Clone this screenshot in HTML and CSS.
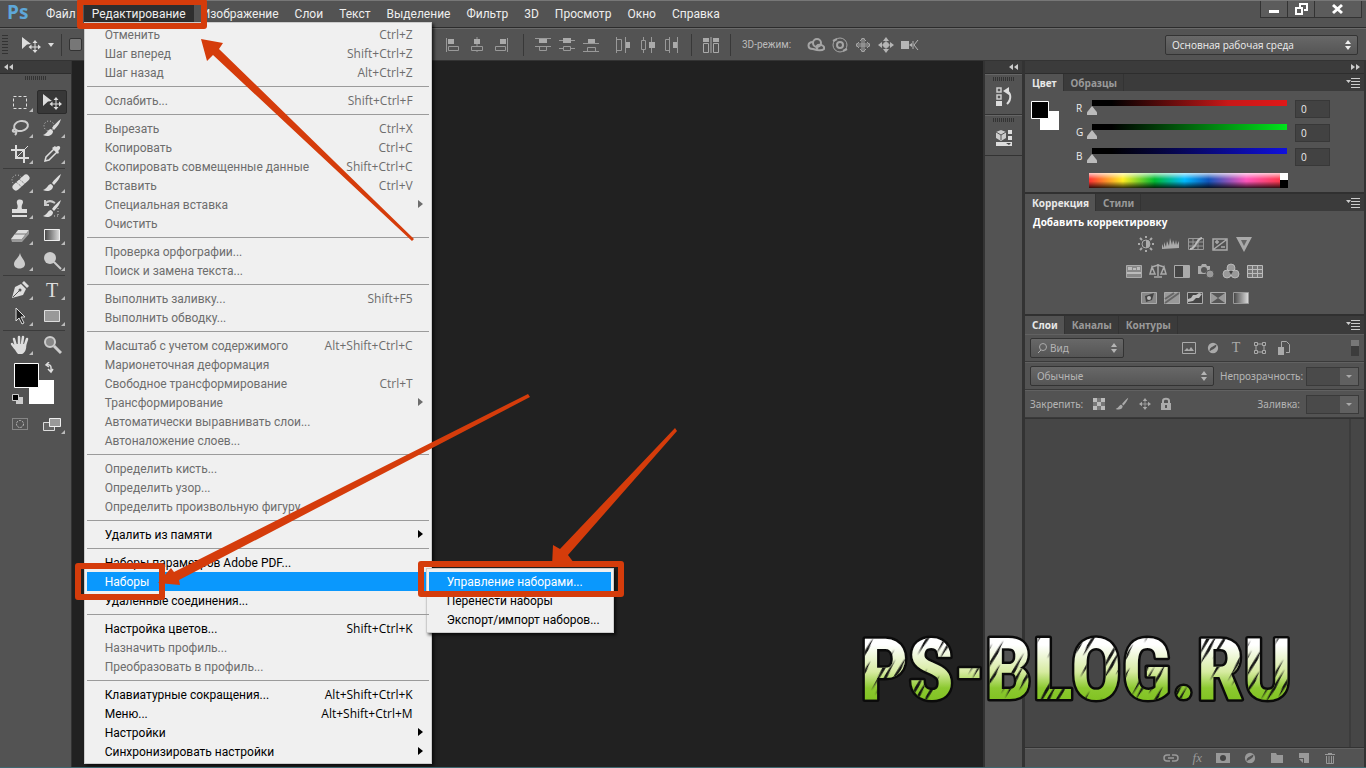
FILE: index.html
```html
<!DOCTYPE html>
<html lang="ru">
<head>
<meta charset="utf-8">
<title>Редактирование – Наборы</title>
<link rel="stylesheet" href="styles.css">
</head>
<body>
<svg class="sprite" aria-hidden="true">
  <symbol id="updown" viewBox="0 0 8 10"><path fill="currentColor" d="M4 0l3 4H1zM4 10l3-4H1z"/></symbol>
  <symbol id="panelmenu" viewBox="0 0 14 10"><path fill="currentColor" d="M0 2h5L2.500 5zM5 0h9v1H5zM5 3h9v1H5zM5 6h9v1H5zM5 9h9v1H5z"/></symbol>
  <symbol id="move" viewBox="0 0 20 16"><path fill="currentColor" d="M1 0l9 7-4 .5L1 12z"/><path d="M14 5v10M9 10h10" stroke="currentColor"/><path fill="currentColor" d="M14 3l2.500 3h-5zM14 16l2.500-3h-5zM7.500 10l3-2.500v5zM20 10l-3-2.500v5z"/></symbol>
  <symbol id="brush" viewBox="0 0 20 20"><path fill="currentColor" d="M19 1c-3 2-7 6-9 9l2 2c3-3 6-7 7-11zM9 11c-3 0-3 4-8 6 4 2 10 1 10-4z"/></symbol>
  <symbol id="cross" viewBox="0 0 16 16"><path d="M8 2v12M2 8h12" stroke="currentColor"/><path fill="currentColor" d="M8 0l3 4H5zM8 16l3-4H5zM0 8l4-3v6zM16 8l-4-3v6z"/></symbol>
  <symbol id="halfdisc" viewBox="0 0 14 14"><circle cx="7" cy="7" r="6" fill="currentColor"/><path d="M3 11c0-5 3-5 8-8 0 5-4 5-8 8z" fill="#535353"/></symbol>
</svg>

<header class="menubar">
  <div class="brand">Ps</div>
  <nav class="menus">
    <button class="menu">Файл</button>
    <div class="menu-holder">
      <button class="menu open">Редактирование</button>
      <ul class="dropdown">
        <li class="off"><span>Отменить</span><kbd>Ctrl+Z</kbd></li>
        <li class="off"><span>Шаг вперед</span><kbd>Shift+Ctrl+Z</kbd></li>
        <li class="off"><span>Шаг назад</span><kbd>Alt+Ctrl+Z</kbd></li>
        <li class="rule"></li>
        <li class="off"><span>Ослабить...</span><kbd>Shift+Ctrl+F</kbd></li>
        <li class="rule"></li>
        <li class="off"><span>Вырезать</span><kbd>Ctrl+X</kbd></li>
        <li class="off"><span>Копировать</span><kbd>Ctrl+C</kbd></li>
        <li class="off"><span>Скопировать совмещенные данные</span><kbd>Shift+Ctrl+C</kbd></li>
        <li class="off"><span>Вставить</span><kbd>Ctrl+V</kbd></li>
        <li class="off more"><span>Специальная вставка</span></li>
        <li class="off"><span>Очистить</span></li>
        <li class="rule"></li>
        <li class="off"><span>Проверка орфографии...</span></li>
        <li class="off"><span>Поиск и замена текста...</span></li>
        <li class="rule"></li>
        <li class="off"><span>Выполнить заливку...</span><kbd>Shift+F5</kbd></li>
        <li class="off"><span>Выполнить обводку...</span></li>
        <li class="rule"></li>
        <li class="off"><span>Масштаб с учетом содержимого</span><kbd>Alt+Shift+Ctrl+C</kbd></li>
        <li class="off"><span>Марионеточная деформация</span></li>
        <li class="off"><span>Свободное трансформирование</span><kbd>Ctrl+T</kbd></li>
        <li class="off more"><span>Трансформирование</span></li>
        <li class="off"><span>Автоматически выравнивать слои...</span></li>
        <li class="off"><span>Автоналожение слоев...</span></li>
        <li class="rule"></li>
        <li class="off"><span>Определить кисть...</span></li>
        <li class="off"><span>Определить узор...</span></li>
        <li class="off"><span>Определить произвольную фигуру</span></li>
        <li class="rule"></li>
        <li class="more"><span>Удалить из памяти</span></li>
        <li class="rule"></li>
        <li><span>Наборы параметров Adobe PDF...</span></li>
        <li class="active"><span>Наборы</span>
          <ul class="submenu">
            <li class="active"><span>Управление наборами...</span></li>
            <li><span>Перенести наборы</span></li>
            <li><span>Экспорт/импорт наборов...</span></li>
          </ul>
        </li>
        <li><span>Удаленные соединения...</span></li>
        <li class="rule"></li>
        <li><span>Настройка цветов...</span><kbd>Shift+Ctrl+K</kbd></li>
        <li class="off"><span>Назначить профиль...</span></li>
        <li class="off"><span>Преобразовать в профиль...</span></li>
        <li class="rule"></li>
        <li><span>Клавиатурные сокращения...</span><kbd>Alt+Shift+Ctrl+K</kbd></li>
        <li><span>Меню...</span><kbd>Alt+Shift+Ctrl+M</kbd></li>
        <li class="more"><span>Настройки</span></li>
        <li class="more"><span>Синхронизировать настройки</span></li>
      </ul>
    </div>
    <button class="menu">Изображение</button>
    <button class="menu">Слои</button>
    <button class="menu">Текст</button>
    <button class="menu">Выделение</button>
    <button class="menu">Фильтр</button>
    <button class="menu">3D</button>
    <button class="menu">Просмотр</button>
    <button class="menu">Окно</button>
    <button class="menu">Справка</button>
  </nav>
  <div class="window-buttons">
    <button aria-label="Свернуть"><svg width="12" height="12"><path fill="#fff" d="M1 7h10v3H1z"/></svg></button>
    <button aria-label="Восстановить"><svg width="13" height="12" fill="none" stroke="#fff" stroke-width="2"><path d="M5 4V1h7v6H9M1 5h6v6H1z"/></svg></button>
    <button class="wide" aria-label="Закрыть"><svg width="12" height="12" stroke="#fff" stroke-width="3"><path d="M1 2l9 8M10 2L1 10"/></svg></button>
  </div>
</header>

<section class="options">
  <div class="options-left">
    <i class="vgrip"></i>
    <svg width="20" height="16"><use href="#move"/></svg>
    <svg width="6" height="4"><path fill="#ddd" d="M0 0h6L3 4z"/></svg>
    <i class="bar"></i>
    <input type="checkbox" class="tick" aria-label="Автовыбор">
  </div>
  <div class="icon-set">
    <svg width="16" height="16"><path stroke="#999" d="M1.500 1v14"/><path fill="#aaa" d="M3 2h6v5H3z"/><path fill="none" stroke="#999" d="M3.500 9.500h10v4h-10z"/></svg>
    <svg width="16" height="16"><path stroke="#999" d="M8 0v15"/><path fill="#aaa" d="M5 2h6v5H5z"/><path fill="#535353" stroke="#999" d="M2.500 9.500h11v4h-11z"/></svg>
    <svg width="16" height="16"><path stroke="#999" d="M14.500 1v14"/><path fill="#aaa" d="M7 2h6v5H7z"/><path fill="none" stroke="#999" d="M2.500 9.500h10v4h-10z"/></svg>
  </div>
  <i class="bar"></i>
  <div class="icon-set">
    <svg width="16" height="16"><path stroke="#999" d="M0 1.500h16M0 9.500h16"/><path fill="#aaa" d="M4 2h8v4H4z"/><path fill="none" stroke="#999" d="M4.500 9.500h7v4h-7z"/></svg>
    <svg width="16" height="16"><path stroke="#999" d="M0 3.500h16M0 11.500h16"/><path fill="#aaa" d="M4 1h8v5H4z"/><path fill="#535353" stroke="#999" d="M4.500 9.500h7v4h-7z"/></svg>
    <svg width="16" height="16"><path stroke="#999" d="M0 6.500h16M0 14.500h16"/><path fill="#aaa" d="M5 2h7v4H5z"/><path fill="none" stroke="#999" d="M4.500 10.500h8v4h-8z"/></svg>
  </div>
  <div class="icon-set spread">
    <svg width="16" height="16"><path stroke="#999" d="M1.500 0v16M10.500 0v16"/><path fill="#aaa" d="M11 5h4v6h-4z"/><path fill="none" stroke="#999" d="M1.500 2.500h5v11h-5z"/></svg>
    <svg width="16" height="16"><path stroke="#999" d="M4.500 0v16M12.500 0v16"/><path fill="#aaa" d="M10 5h6v6h-6z"/><path fill="#535353" stroke="#999" d="M2.500 3.500h4v9h-4z"/></svg>
    <svg width="16" height="16"><path stroke="#999" d="M6.500 0v16M14.500 0v16"/><path fill="#aaa" d="M10 5h4v6h-4z"/><path fill="none" stroke="#999" d="M2.500 2.500h4v11h-4z"/></svg>
  </div>
  <i class="bar"></i>
  <svg class="single" width="16" height="16"><path fill="#aaa" d="M0 1h6v4H0zM10 1h6v4h-6z"/><path fill="none" stroke="#aaa" d="M.5 6.500h5v9h-5zM10.500 6.500h5v9h-5zM8 0v16"/></svg>
  <i class="bar"></i>
  <span class="mode-label">3D-режим:</span>
  <div class="icon-set modes">
    <svg width="18" height="16" fill="none" stroke="#a5a5a5" stroke-width="2"><circle cx="10" cy="6" r="4"/><path d="M6 5C0 5 0 12 6 12c3 1 9 2 11 0 1-3-3-5-6-4-2 1-2 3 0 4"/></svg>
    <svg width="18" height="16" fill="none" stroke="#a5a5a5"><circle cx="9" cy="8" r="7"/><circle cx="9" cy="8" r="3" stroke-width="2"/><path d="M2 4l4-2M12 14l4-2" stroke-width="2"/></svg>
    <svg width="16" height="16" fill="none" stroke="#a5a5a5"><path d="M7 1v14M9 1v14M1 7h14M1 9h14M5 4l3-3 3 3M5 12l3 3 3-3M4 5L1 8l3 3M12 5l3 3-3 3"/></svg>
    <svg width="18" height="16" color="#b5b5b5" viewBox="-1 0 18 16"><path d="M8 2v12M2 8h12" stroke="#b5b5b5"/><path fill="#b5b5b5" d="M8 0l3 4H5zM8 16l3-4H5zM0 8l4-3v6zM16 8l-4-3v6z"/><circle cx="8" cy="8" r="3" fill="#b5b5b5"/></svg>
    <svg width="19" height="12"><path fill="#b5b5b5" d="M0 2h8v8H0zM8 6l3-2v4z"/><path fill="none" stroke="#b5b5b5" d="M17 1l-4 5 4 5M12 2v8"/></svg>
  </div>
  <label class="pick workspace"><select aria-label="Рабочая среда"><option>Основная рабочая среда</option></select><svg width="8" height="10"><use href="#updown"/></svg></label>
</section>

<main class="work">
  <aside class="tools">
    <div class="collapse"><svg width="9" height="6"><path fill="#ccc" d="M4 0v6L0 3zM9 0v6L5 3z"/></svg></div>
    <i class="hgrip"></i>
    <div class="tool-grid">
      <button aria-label="Область"><svg width="20" height="20"><path d="M3.500 4.500h13v12h-13z" fill="none" stroke="#ddd" stroke-dasharray="3 2"/></svg></button>
      <button class="chosen" aria-label="Перемещение"><svg width="20" height="16"><use href="#move"/></svg></button>
      <button aria-label="Лассо"><svg width="20" height="20" fill="none" stroke="#ccc" stroke-width="2"><ellipse cx="11" cy="8" rx="7" ry="5" transform="rotate(-12 11 8)"/><path d="M5 11c-4 1-2 4 1 2 1 2 0 3-1 4"/></svg></button>
      <button aria-label="Быстрое выделение"><svg width="20" height="20"><circle cx="7" cy="8" r="5" fill="none" stroke="#ccc" stroke-dasharray="1 2"/><use href="#brush"/></svg></button>
      <button aria-label="Рамка"><svg width="20" height="20" fill="none" stroke="#ddd" stroke-width="2"><path d="M6 1v13h13M1 6h13v13"/><path d="M7 13L18 2" stroke-width="1"/></svg></button>
      <button aria-label="Пипетка"><svg width="20" height="20"><path d="M3 17l1-4 8-8 3 3-8 8z" fill="none" stroke="#ddd" stroke-width="1.500"/><path fill="#ddd" d="M10 4l6 6 1-2-1-1c4-3 2-7-2-4l-1-1z"/></svg></button>
      <hr>
      <button aria-label="Восстановление"><svg width="20" height="20"><circle cx="7" cy="7" r="5" fill="none" stroke="#ccc" stroke-dasharray="1 2"/><path d="M6 14L16 5" stroke="#ddd" stroke-width="7" stroke-linecap="round"/><path d="M6 9l6 5M9 6l6 5" stroke="#666" stroke-dasharray="1 1"/></svg></button>
      <button aria-label="Кисть"><svg width="20" height="20"><use href="#brush"/></svg></button>
      <button aria-label="Штамп"><svg width="20" height="20"><path fill="#ddd" d="M7 2c1-2 6-2 6 1 0 2-2 3-1 7h5v4H2v-4h5c2-4-1-5 0-8zM2 16h15v2H2z"/></svg></button>
      <button aria-label="Архивная кисть"><svg width="20" height="20"><use href="#brush"/><path fill="none" stroke="#ccc" stroke-width="2" d="M3 5c3-4 7-3 10-1M3 1v5h4"/><path stroke="#ccc" stroke-dasharray="1 2" d="M16 9v8M12 17h4"/></svg></button>
      <button aria-label="Ластик"><svg width="20" height="20"><path fill="#ddd" d="M8 5h11l-7 9H1z"/><path fill="#999" d="M1 14h11v3H2zM19 5v4l-7 8v-3z"/><path d="M5 9h11" stroke="#777"/></svg></button>
      <button aria-label="Градиент"><svg width="20" height="20"><defs><linearGradient id="gr"><stop stop-color="#444"/><stop offset="1" stop-color="#ddd"/></linearGradient></defs><path fill="url(#gr)" stroke="#eee" d="M2.500 4.500h15v11h-15z"/></svg></button>
      <button aria-label="Размытие"><svg width="20" height="20"><path fill="#ccc" d="M10 2c1 5 5 7 5 11 0 6-11 6-11 0 0-4 5-6 6-11z"/></svg></button>
      <button aria-label="Осветлитель"><svg width="20" height="20"><circle cx="8" cy="7" r="6" fill="#ccc"/><path d="M12 11l7 7" stroke="#ccc" stroke-width="2"/></svg></button>
      <hr>
      <button aria-label="Перо"><svg width="20" height="20"><path fill="#ddd" d="M2 18l3-11 6-3 5 5-3 6z"/><path fill="#ddd" d="M12 3l2-2 5 5-2 2z"/><path d="M3 17l6-6" stroke="#555"/><circle cx="10" cy="10" r="1.500" fill="#555"/></svg></button>
      <button class="type-tool" aria-label="Текст">T</button>
      <button aria-label="Выделение контура"><svg width="20" height="20"><path fill="#222" stroke="#ddd" d="M6 2v13l3-3 3 6 2-1-3-6h4z"/></svg></button>
      <button aria-label="Прямоугольник"><svg width="20" height="20"><path fill="#999" stroke="#ddd" d="M2.500 4.500h15v11h-15z"/></svg></button>
      <hr>
      <button aria-label="Рука"><svg width="20" height="20"><path fill="none" stroke="#ddd" stroke-width="2.500" stroke-linecap="round" d="M6 11L4 4M9 9V2M12 9l1-7M15 10l2-6M5 13l-3-4"/><path fill="#ddd" d="M5 9h11c1 4-1 9-4 10H8c-2-2-4-6-5-8z"/></svg></button>
      <button class="plain" aria-label="Масштаб"><svg width="20" height="20"><circle cx="8" cy="7" r="5" fill="#888" stroke="#ccc" stroke-width="2"/><path d="M12 11l7 7" stroke="#ccc" stroke-width="3"/></svg></button>
    </div>
    <svg class="swatches" width="44" height="46"><path fill="#fff" d="M18 18h25v24H18z"/><path stroke="#fff" stroke-width="1" d="M3.500 1.500h24v24h-24z"/><path fill="#ccc" d="M5 35h7v7H5z"/><path stroke="#ccc" d="M1.500 32.500h6v6h-6z"/><path fill="none" stroke="#ddd" stroke-width="1.500" d="M36 3c5-1 4 3 4 6M38 0l-3 3 3 2M37 7l3 3 2-3"/></svg>
    <div class="tool-grid last">
      <button class="plain" aria-label="Быстрая маска"><svg width="20" height="20"><path fill="none" stroke="#bbb" stroke-dasharray="1 1" d="M2.500 4.500h15v11h-15z"/><circle cx="10" cy="10" r="3.500" fill="none" stroke="#bbb" stroke-dasharray="2 1"/></svg></button>
      <button aria-label="Режим экрана"><svg width="20" height="20"><path fill="#666" stroke="#ddd" d="M1.500 8.500h11v8h-11z"/><path fill="#999" stroke="#eee" d="M7.500 4.500h11v8h-11z"/></svg></button>
    </div>
  </aside>

  <div class="canvas"></div>

  <aside class="strip">
    <div class="collapse end"><svg width="9" height="6"><path fill="#ccc" d="M4 0v6L0 3zM9 0v6L5 3z"/></svg></div>
    <div class="strip-cell"><i class="hgrip"></i><button aria-label="История"><svg width="18" height="20"><path fill="none" stroke="#ccc" stroke-width="1.500" d="M2 1h4v4H2zM2 8h4v4H2z"/><path fill="#ddd" d="M1 14h6v5H1z"/><path fill="none" stroke="#ddd" stroke-width="2" d="M11 4c5 1 6 8 1 13"/><path fill="#ddd" d="M8 4l6-4v8z"/></svg></button></div>
    <div class="strip-cell"><i class="hgrip"></i><button aria-label="Свойства"><svg width="18" height="20"><path fill="#ccc" d="M6 2l5 2v6l-5 3-5-3V4z"/><path fill="none" stroke="#555" d="M1 4l5 3 5-3M6 7v5"/><path fill="#ddd" d="M13 2h4v4h-4zM13 8h4v4h-4zM1 14h16v4H1z"/><path fill="#444" d="M11 15h5l-2 2z"/></svg></button></div>
  </aside>

  <aside class="panels">
    <div class="collapse end"><svg width="9" height="6"><path fill="#ccc" d="M0 0v6l4-3zM5 0v6l4-3z"/></svg></div>
    <section class="panel">
      <div class="tabs"><button class="tab on">Цвет</button><button class="tab">Образцы</button><svg width="14" height="10"><use href="#panelmenu"/></svg></div>
      <div class="color-body">
        <svg width="30" height="30"><path fill="#fff" d="M10 11h19v19H10z"/><path stroke="#fff" d="M1.500 1.500h17v17h-17z"/></svg>
        <div class="channels">
          <label for="r">R</label><input id="r" type="range" class="red" min="0" max="255" value="0"><input class="num" aria-label="R" value="0">
          <label for="g">G</label><input id="g" type="range" class="green" min="0" max="255" value="0"><input class="num" aria-label="G" value="0">
          <label for="b">B</label><input id="b" type="range" class="blue" min="0" max="255" value="0"><input class="num" aria-label="B" value="0">
          <div class="spectrum"><i></i></div>
        </div>
      </div>
    </section>
    <section class="panel">
      <div class="tabs"><button class="tab on">Коррекция</button><button class="tab">Стили</button><svg width="14" height="10"><use href="#panelmenu"/></svg></div>
      <div class="adjust-body">
        <h2>Добавить корректировку</h2>
        <div class="adjust-row">
          <svg width="18" height="16"><circle cx="9" cy="8" r="4" fill="none" stroke="#aaa"/><path fill="#aaa" d="M9 4a4 4 0 0 1 0 8z"/><path stroke="#aaa" stroke-width="2" d="M9 0v2M9 14v2M1 8h2M15 8h2M3 2l2 2M13 12l2 2M15 2l-2 2M5 12l-2 2"/></svg>
          <svg width="18" height="16"><path fill="#aaa" d="M0 13V8l2 4V6l2 5 1-6 2 5 1-8 2 7 1-5 2 5 1-5 1 5 2-4v7z"/></svg>
          <svg width="18" height="16" fill="none" stroke="#999"><path d="M1.500 2.500h15v11h-15zM1 6h16M1 10h16M6 2v12M11 2v12"/><path stroke="#bbb" stroke-width="2" d="M3 13c6 0 6-10 12-11"/></svg>
          <svg width="16" height="16" fill="none" stroke="#aaa"><path stroke-width="1.500" d="M1 3h14v11H1zM2 13L14 4M3 6h4M5 4v4M9 11h4"/></svg>
          <svg width="18" height="16"><path fill="#aaa" d="M1 1h16L9 16z"/><path fill="#666" d="M6 4h6l-3 6z"/></svg>
        </div>
        <div class="adjust-row">
          <svg width="16" height="14"><path fill="#888" stroke="#aaa" d="M.5 1.500h15v12H.5z"/><path fill="#bbb" d="M2 3h4v3H2zM7 4h3v2H7zM11 3h3v3h-3zM1 8h14v2H1z"/></svg>
          <svg width="18" height="16" fill="none" stroke="#aaa" stroke-width="1.500"><path d="M9 1v12M3 4l6-2 6 2M3 4l-2 7h5zM15 4l-3 7h5zM5 14h8"/></svg>
          <svg width="16" height="14"><path fill="#444" stroke="#aaa" d="M.5 1.500h15v12H.5z"/><path fill="#aaa" d="M9 2h6v11H9z"/></svg>
          <svg width="18" height="16"><path fill="#aaa" d="M1 3h3l1-2h4l1 2h3v8H1z"/><circle cx="7" cy="7" r="3" fill="#555"/><circle cx="13" cy="11" r="4" fill="#999" stroke="#555"/></svg>
          <svg width="18" height="16" fill="#999" stroke="#ccc" stroke-width=".7"><circle cx="9" cy="5" r="4"/><circle cx="5" cy="11" r="4"/><circle cx="13" cy="11" r="4"/><path fill="#444" stroke="none" d="M7 8h4l-2 4z"/></svg>
          <svg width="16" height="14"><path fill="#777" stroke="#bbb" d="M.5 1.500h15v12H.5zM0 5.500h16M0 9.500h16M5.500 1v13M10.500 1v13"/></svg>
        </div>
        <div class="adjust-row">
          <svg width="16" height="14"><path fill="#888" stroke="#aaa" d="M.5 1.500h15v11H.5z"/><path fill="#444" d="M4 5l9-3-2 7-6 2z"/><circle cx="8" cy="7" r="2" fill="#bbb"/></svg>
          <svg width="16" height="14"><path fill="#999" stroke="#aaa" d="M.5 1.500h15v11H.5z"/><path stroke="#666" stroke-width="2" d="M1 12L15 2M1 8l9-6"/></svg>
          <svg width="16" height="14"><path fill="#444" stroke="#aaa" d="M.5 1.500h15v11H.5z"/><path fill="#bbb" d="M1 8l3-1 2-3h3l3-2 3 1-3 4H9l-3 3-5 1z"/></svg>
          <svg width="16" height="14"><path fill="#999" stroke="#aaa" d="M.5 1.500h15v11H.5z"/><path fill="#555" d="M1 2h14L8 7zM1 12h14L8 7z"/></svg>
          <svg width="16" height="14"><path fill="url(#gr)" stroke="#999" d="M.5 1.500h15v11H.5z"/></svg>
        </div>
      </div>
    </section>
    <section class="panel layers">
      <div class="tabs"><button class="tab on">Слои</button><button class="tab">Каналы</button><button class="tab">Контуры</button><svg width="14" height="10"><use href="#panelmenu"/></svg></div>
      <div class="layer-row">
        <label class="pick kind"><svg class="lens" width="10" height="10" fill="none" stroke="#aaa"><circle cx="6" cy="4" r="3.500"/><path d="M4 7L1 10"/></svg><select aria-label="Вид"><option>Вид</option></select><svg width="8" height="10"><use href="#updown"/></svg></label>
        <div class="icon-set filters">
          <svg width="14" height="12"><path fill="none" stroke="#aaa" d="M.5.5h13v11H.5z"/><path fill="#aaa" d="M2 9l3-3 2 2 2-3 3 4z"/></svg>
          <svg width="12" height="12" viewBox="0 0 14 14"><use href="#halfdisc" width="14" height="14"/></svg>
          <b>T</b>
          <svg width="14" height="14" fill="none" stroke="#aaa"><path d="M3 3h8v8H3z"/><path d="M1.500 1.500h3v3h-3zM9.500 1.500h3v3h-3zM1.500 9.500h3v3h-3zM9.500 9.500h3v3h-3z" fill="#535353"/></svg>
          <svg width="12" height="14"><path fill="none" stroke="#aaa" d="M3.500 6V.5h5l3 3v8H8"/><path fill="#aaa" d="M0 6h6v8H0z"/></svg>
        </div>
        <i class="switch"></i>
      </div>
      <div class="layer-row">
        <label class="pick blend"><select aria-label="Режим"><option>Обычные</option></select><svg width="8" height="10"><use href="#updown"/></svg></label>
        <label class="caption" for="op">Непрозрачность:</label>
        <span class="combo"><input id="op"><button aria-label="Открыть"></button></span>
      </div>
      <div class="layer-row">
        <span class="caption">Закрепить:</span>
        <div class="icon-set locks">
          <svg width="12" height="12"><path fill="#777" d="M0 0h12v12H0z"/><path fill="#bbb" d="M0 0h4v4H0zM8 0h4v4H8zM4 4h4v4H4zM0 8h4v4H0zM8 8h4v4H8z"/></svg>
          <svg width="16" height="14" viewBox="0 0 20 20"><use href="#brush" width="20" height="20"/></svg>
          <svg width="12" height="12" viewBox="0 0 16 16"><use href="#cross" width="16" height="16"/></svg>
          <svg width="12" height="14"><path fill="none" stroke="#aaa" stroke-width="2" d="M3 6V4c0-3 6-3 6 0v2"/><path fill="#aaa" d="M1 6h10v7H1z"/><path fill="#555" d="M5 8h2v3H5z"/></svg>
        </div>
        <label class="caption push" for="fill">Заливка:</label>
        <span class="combo"><input id="fill"><button aria-label="Открыть"></button></span>
      </div>
      <div class="layer-list"><i></i></div>
      <div class="layer-foot">
        <svg width="16" height="12" fill="none" stroke="#999" stroke-width="1.500"><path d="M7 3H4C0 3 0 9 4 9h3M9 3h3c4 0 4 6 0 6H9M5 6h6"/></svg>
        <em>fx</em>
        <svg width="14" height="12"><path fill="#999" d="M0 1h14v10H0z"/><circle cx="7" cy="6" r="3" fill="#444"/></svg>
        <svg width="12" height="12" viewBox="0 0 14 14"><use href="#halfdisc" width="14" height="14"/></svg>
        <svg width="14" height="12"><path fill="#999" d="M1 1h5l1 2h6v8H1z"/></svg>
        <svg width="12" height="12"><path fill="#999" d="M1 1h10v10H6V6H1z"/><path fill="#999" d="M1 7h4v4z"/></svg>
        <svg width="12" height="12" fill="none" stroke="#999"><path d="M1 2.500h10M4 1.500h4M2.500 4v7.500h7V4M5 4v7M7.500 4v7"/></svg>
      </div>
    </section>
  </aside>
</main>

<svg class="logo" width="440" height="84">
  <defs>
    <linearGradient id="lime" x1="0" y1="0" x2="0" y2="1"><stop offset=".25" stop-color="#fff"/><stop offset=".52" stop-color="#d6eba0"/><stop offset=".68" stop-color="#8cc930"/><stop offset="1" stop-color="#6fb80c"/></linearGradient>
    <pattern id="scratch" width="38" height="62" patternUnits="userSpaceOnUse" patternTransform="rotate(30)"><path fill="#111" d="M4 0l2 20-1 28-2-26zM10 8l2 22-2 20-1-24zM18 0l2 14-1 22-2-12zM27 22l2 12-2 22-1-14z"/></pattern>
  </defs>
  <g class="logo-text">
    <text x="2" y="71" fill="url(#lime)" stroke="#0b0b0b" stroke-width="5" stroke-linejoin="round" paint-order="stroke">PS-BLOG.RU</text>
    <text x="2" y="71" fill="url(#scratch)">PS-BLOG.RU</text>
  </g>
</svg>

<svg class="marks" aria-hidden="true">
  <g fill="none" stroke="#d53c0b" stroke-width="6" stroke-linejoin="round">
    <path d="M80 2h124v24H80zM78 566h84v31H78zM421 564h200v30H421z"/>
  </g>
  <path fill="#d53c0b" d="M201 39l22 4-4 6 195 190-2 2L213 55l-6 6zM158 583l13-15 3 4 354-178 2 3-351 183 1 5zM552 566l1-21 7 4 115-121 2 3-109 124 6 8z"/>
</svg>
</body>
</html>
```
FILE: styles.css
```css
* { box-sizing: border-box; }
body {
  margin: 0;
  height: 100vh;
  display: flex;
  flex-direction: column;
  overflow: hidden;
  position: relative;
  background: #535353;
  color: #eee;
  font: 12px/16px Roboto, "Open Sans", sans-serif;
  border-bottom: 1px solid #3f6870;
}
button, input, select {
  font: inherit;
  color: inherit;
  border: 0;
  margin: 0;
  padding: 0;
  background: none;
  outline: 0;
}
svg { flex: none; }
.sprite { position: absolute; width: 0; height: 0; }

.menubar {
  display: flex;
  height: 28px;
  flex: none;
  border-top: 1px solid #777;
  border-bottom: 1px solid #2c2c2c;
}
.brand {
  width: 38px;
  padding-left: 7px;
  color: #5ea7d8;
  font: bold 19px/23px "Open Sans", sans-serif;
}
.menus { display: flex; padding-top: 4px; height: 21px; }
.menu { height: 17px; padding: 0 8px; white-space: nowrap; line-height: 16px; }
.menu.open { background: #2e2e2e; }
.menu-holder { position: relative; }

.dropdown, .submenu {
  position: absolute;
  margin: 0;
  list-style: none;
  background: #f0f0f0;
  color: #000;
  border: 1px solid #ccc;
  box-shadow: 2px 2px 3px #000a;
}
.dropdown { left: 0; top: 17px; width: 348px; padding: 2px; z-index: 2; }
.dropdown li {
  position: relative;
  display: flex;
  justify-content: space-between;
  height: 19px;
  line-height: 20px;
  padding: 0 16px 0 18px;
  white-space: nowrap;
}
.dropdown li.off { color: #6d6d6d; }
.dropdown li.active { background: #0a98fd; color: #fff; }
.dropdown li.rule { height: 9px; padding: 4px 0; }
.dropdown li.rule::before { content: ""; flex: 1; height: 1px; background: #9b9b9b; }
.dropdown li.more::after {
  content: "";
  position: absolute;
  right: 6px;
  top: 5px;
  border: 4px solid transparent;
  border-left: 5px solid currentColor;
  border-right: 0;
}
kbd { font: 12px/20px "Open Sans", "Noto Sans", sans-serif; }
.submenu { left: 339px; top: -4px; width: 188px; padding: 3px 2px; }
.dropdown .submenu li:not(.active) { color: #000; }

.window-buttons {
  display: flex;
  margin-left: auto;
  margin-right: 4px;
  height: 17px;
  border: 1px solid #333;
  border-top: 0;
}
.window-buttons button { width: 27px; display: grid; place-items: center; border-right: 1px solid #333; background: #5c5c5c; }
.window-buttons .wide { width: 46px; border: 0; }

.options {
  display: flex;
  align-items: center;
  height: 33px;
  flex: none;
  border-top: 1px solid #6a6a6a;
  border-bottom: 1px solid #333;
  padding-right: 8px;
}
.options-left { display: flex; align-items: center; gap: 7px; width: 445px; color: #ddd; padding-left: 2px; }
.vgrip { width: 6px; height: 20px; margin-right: 6px; background: repeating-linear-gradient(#333 0 1px, transparent 1px 3px); }
.tick { appearance: none; width: 13px; height: 13px; background: #777; border: 1px solid #333; border-radius: 2px; }
.bar { width: 1px; height: 22px; background: #383838; }
.icon-set { display: flex; align-items: center; gap: 8px; color: #aaa; }
.options > .icon-set { margin-right: 14px; }
.options > .spread { margin-left: 2px; margin-right: 12px; }
.options > .bar { margin-right: 11px; }
.options > .modes { gap: 6px; }
.options .single { margin-right: 11px; }
.mode-label { width: 65px; font-size: 10px; color: #bbb; white-space: nowrap; }
.pick {
  display: flex;
  align-items: center;
  flex: none;
  height: 20px;
  border: 1px solid #333;
  border-radius: 2px;
  background: linear-gradient(#686868, #555);
  padding: 0 5px 0 6px;
  font-size: 10px;
}
.pick select { appearance: none; flex: 1; min-width: 0; }
.options .workspace { margin-left: auto; width: 193px; margin-right: 0; font-family: "Open Sans", sans-serif; }

.work { flex: 1; min-height: 0; display: flex; }
.collapse {
  height: 13px;
  flex: none;
  display: flex;
  align-items: center;
  padding: 0 4px;
  background: #3b3b3b;
  border-bottom: 1px solid #2d2d2d;
}
.collapse.end { justify-content: flex-end; }
.hgrip { display: block; width: 21px; height: 4px; margin: 2px auto 0; background: repeating-linear-gradient(90deg, #333 0 1px, transparent 1px 2px); }

.tools { width: 72px; flex: none; display: flex; flex-direction: column; border-right: 1px solid #333; }
.tool-grid { display: grid; grid-template-columns: 33px 32px; grid-auto-rows: auto; padding: 9px 0 0 3px; color: #ddd; }
.tool-grid button { position: relative; height: 26px; display: grid; place-items: center; }
.tool-grid button::after {
  content: "";
  position: absolute;
  right: 3px;
  bottom: 3px;
  border: 2px solid transparent;
  border-right-color: #bbb;
  border-bottom-color: #bbb;
}
.tool-grid .chosen::after, .tool-grid .plain::after { display: none; }
.tool-grid .chosen { background: #383838; border: 1px solid #2b2b2b; height: 24px; margin: 1px; border-radius: 2px; }
.tool-grid hr { grid-column: 1 / 3; width: 62px; height: 1px; margin: 1px 0; border: 0; background: #3b3b3b; }
.tool-grid .type-tool { font: 20px/26px "Liberation Serif", serif; }
.swatches { margin: 4px 0 0 11px; }
.tool-grid.last { padding-top: 3px; }

.canvas { flex: 1; background: #212121; }

.strip { width: 39px; flex: none; border-left: 2px solid #333; }
.strip-cell { height: 41px; border-bottom: 1px solid #333; border-top: 1px solid #666; }
.strip-cell button { display: grid; place-items: center; width: 100%; height: 32px; }

.panels { width: 344px; flex: none; display: flex; flex-direction: column; border-left: 3px solid #333; border-right: 2px solid #333; font-family: "Open Sans", "Noto Sans", sans-serif; }
.panel { flex: none; border-bottom: 2px solid #303030; }
.tabs { display: flex; height: 17px; background: #3b3b3b; color: #ccc; padding-right: 4px; align-items: center; }
.tabs svg { margin-left: auto; }
.tab { height: 17px; padding: 0 6px 0 7px; font: bold 10px/16px "Noto Sans", "Open Sans", sans-serif; color: #999; border-right: 1px solid #333; }
.tab.on { background: #535353; color: #e8e8e8; }

.color-body { display: flex; gap: 16px; padding: 9px 34px 0 5px; height: 101px; }
.channels { flex: 1; display: grid; grid-template-columns: 8px 1fr 35px; grid-template-rows: 24px 24px 24px 16px; column-gap: 3px; font-size: 10px; }
.channels label { line-height: 16px; }
.channels input[type="range"] { appearance: none; width: 100%; height: 16px; min-width: 0; }
.channels input::-webkit-slider-runnable-track { height: 16px; background: var(--ramp) no-repeat 5px 0 / calc(100% - 10px) 6px; }
.channels input::-webkit-slider-thumb { appearance: none; width: 10px; height: 9px; margin-top: 6px; background: #bbb; clip-path: polygon(50% 0, 100% 70%, 100% 100%, 0 100%, 0 70%); }
.red { --ramp: linear-gradient(90deg, #000 10%, #c81818 70%, #e01818); }
.green { --ramp: linear-gradient(90deg, #000 10%, #00e41c); }
.blue { --ramp: linear-gradient(90deg, #000 10%, #1010dd); }
.num { width: 35px; height: 18px; padding-left: 5px; background: #424242; border: 1px solid #383838; font-size: 10px; }
.spectrum {
  grid-column: 2;
  margin: 1px 4px 0 2px;
  height: 15px;
  display: flex;
  justify-content: flex-end;
  background: linear-gradient(#fffb, #fff0 40%, #0000 55%, #000c), linear-gradient(90deg, #f33, #fe2 17%, #0b3 33%, #0bf 48%, #15b 60%, #f5b 79%, #f33);
}
.spectrum i { width: 8px; background: linear-gradient(#fff 50%, #000 50%); }

.adjust-body { height: 103px; padding: 3px 8px; }
.adjust-body h2 { margin: 0; font-size: 10px; line-height: 16px; color: #fff; }
.adjust-row { display: flex; justify-content: center; align-items: center; gap: 7px; height: 27px; }

.layers { flex: 1; display: flex; flex-direction: column; min-height: 0; border: 0; }
.layers .tabs { flex: none; height: 18px; }
.layers .tab { height: 18px; }
.layer-row { display: flex; align-items: center; height: 28px; flex: none; padding: 0 5px; border-top: 1px solid #616161; border-bottom: 1px solid #3a3a3a; font: 10px/16px "Noto Sans", "Open Sans", sans-serif; color: #b5b5b5; }
.kind { width: 94px; gap: 3px; }
.filters { margin-left: 58px; gap: 11px; }
.filters b { font: 14px/14px "Liberation Serif", serif; width: 12px; text-align: center; }
.switch { margin-left: auto; width: 8px; height: 16px; background: linear-gradient(#777 40%, #3c3c3c 40%); }
.blend { width: 184px; }
.caption { white-space: nowrap; margin: 0 6px; }
.layer-row > .caption:first-child { margin-left: 0; }
.layer-row > .push { margin-left: auto; }
.combo { display: flex; flex: none; width: 53px; height: 19px; margin-left: auto; border: 1px solid #3a3a3a; }
.blend + .caption { margin-right: 0; }
.push + .combo { margin-left: 0; }
.combo input { flex: 1; min-width: 0; background: #4a4a4a; }
.combo button { width: 18px; background: #606060; display: grid; place-items: center; }
.combo button::after { content: ""; border: 3px solid transparent; border-top-color: #aaa; border-bottom: 0; }
.locks { gap: 9px; margin-left: 4px; }
.layer-list { flex: 1; background: #464646; border-top: 1px solid #333; display: flex; justify-content: flex-end; }
.layer-list i { width: 15px; border-left: 2px solid #3c3c3c; }
.layer-foot { display: flex; align-items: center; justify-content: flex-end; gap: 14px; height: 20px; flex: none; padding-right: 28px; border-top: 1px solid #333; box-shadow: inset 0 1px #626262; color: #999; }
.layer-foot em { font: italic 13px/12px "Liberation Serif", serif; }

.logo { position: absolute; right: 68px; bottom: 55px; z-index: 3; overflow: visible; }
.logo-text { font: bold 85px "Roboto Condensed", Roboto, sans-serif; }
.marks { position: absolute; left: 0; top: 0; width: 100%; height: 100%; z-index: 4; pointer-events: none; }
```
